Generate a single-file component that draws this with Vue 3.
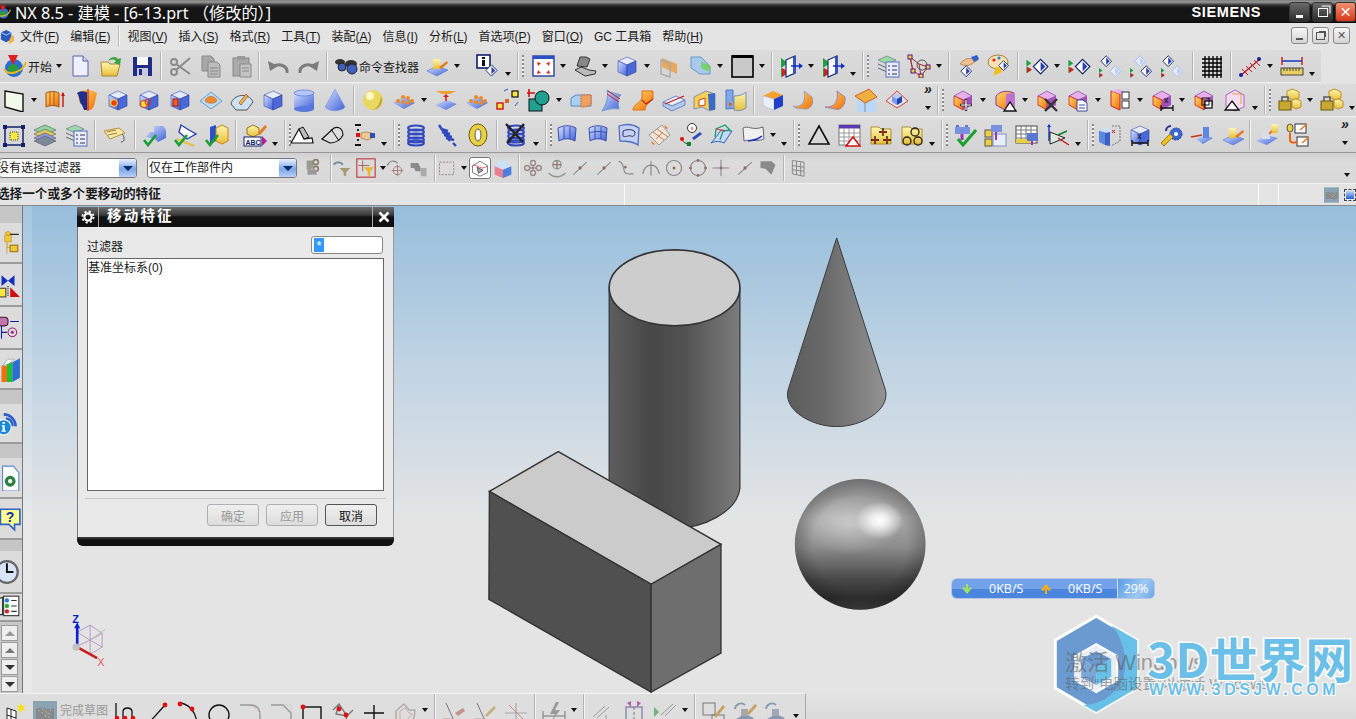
<template>
  <div class="app">
    <!-- shared icon parts -->
    <svg class="defs" width="0" height="0">
      <defs>
        <linearGradient id="gB" x1="0" y1="0" x2="1" y2="1"><stop offset="0" stop-color="#d6e2ff" /><stop offset="1" stop-color="#3f62d8" /></linearGradient>
        <linearGradient id="gO" x1="0" y1="0" x2="1" y2="1"><stop offset="0" stop-color="#ffd76a" /><stop offset="1" stop-color="#f0700a" /></linearGradient>
        <linearGradient id="gY" x1="0" y1="0" x2="0" y2="1"><stop offset="0" stop-color="#fff6b0" /><stop offset="1" stop-color="#e6bf3a" /></linearGradient>
        <linearGradient id="gP" x1="0" y1="0" x2="1" y2="1"><stop offset="0" stop-color="#f0c0f0" /><stop offset="1" stop-color="#8a3aa8" /></linearGradient>
        <linearGradient id="side" x1="0" y1="0" x2="1" y2="0"><stop offset="0" stop-color="#5e5e5e" /><stop offset=".32" stop-color="#474747" /><stop offset=".58" stop-color="#525252" /><stop offset="1" stop-color="#7c7c7c" /></linearGradient>
        <linearGradient id="coneG" x1="0" y1="0" x2="1" y2="0"><stop offset="0" stop-color="#5c5c5c" /><stop offset=".4" stop-color="#6a6a6a" /><stop offset="1" stop-color="#939393" /></linearGradient>
        <linearGradient id="ballG" x1="0" y1="0" x2="0" y2="1"><stop offset="0" stop-color="#8e8e8e" /><stop offset=".3" stop-color="#a8a8a8" /><stop offset=".52" stop-color="#8c8c8c" /><stop offset=".78" stop-color="#454545" /><stop offset=".91" stop-color="#2f2f2f" /><stop offset="1" stop-color="#444" /></linearGradient>
        <radialGradient id="ballH"><stop offset="0" stop-color="#fff" /><stop offset=".3" stop-color="#fff" stop-opacity=".8" /><stop offset="1" stop-color="#fff" stop-opacity="0" /></radialGradient>
        <radialGradient id="ballW"><stop offset="0" stop-color="#fff" stop-opacity=".4" /><stop offset="1" stop-color="#fff" stop-opacity="0" /></radialGradient>
        <radialGradient id="ballE"><stop offset=".72" stop-color="#000" stop-opacity="0" /><stop offset="1" stop-color="#000" stop-opacity=".22" /></radialGradient>

        <g id="c"><path d="M3 7l9-4 9 4-9 4z" fill="#e4ebff" stroke="#3a4fb0" stroke-width=".6" /><path d="M3 7l9 4v11l-9-4z" fill="url(#gB)" stroke="#3a4fb0" stroke-width=".6" /><path d="M12 11l9-4v11l-9 4z" fill="#4a68d6" stroke="#2c3c98" stroke-width=".6" /></g>
        <g id="co"><path d="M3 8l9-5 9 5-9 4z" fill="#e8b0e8" stroke="#8a3aa8" stroke-width=".7" /><path d="M3 8l9 4v10l-9-5z" fill="url(#gO)" stroke="#d02020" stroke-width=".8" /><path d="M12 12l9-4v9l-9 5z" fill="#a050b8" /></g>
        <g id="d"><path d="M12 3l9 9-9 9-9-9z" fill="#fff" stroke="#10206a" stroke-width="1.5" /><path d="M12 6l6 6-6 6z" fill="#2a3fb0" /></g>
        <g id="dl"><path d="M12 3l9 9-9 9-9-9z" fill="#e8eeff" stroke="#a0b8f0" stroke-width="1.5" /><path d="M12 6l6 6-6 6z" fill="#b8c8f8" /></g>
        <g id="tri"><path d="M2 4l7 5-7 5zM2 14l7 5-7 4z" fill="#20a040" /><path d="M3 14l7 4-7 5z" fill="#d02020" /></g>
        <g id="sf"><path d="M3 5c6-3 12-3 18 0l-1 13c-5-3-11-3-16 0z" fill="url(#gB)" stroke="#3a4fb0" /><path d="M9 4v12M15 4v12" stroke="#3a4fb0" /></g>

        <g id="start"><circle cx="11" cy="14" r="9" fill="#2c6fd0" /><path d="M6 12c3-3 8-2 9 1s-2 7-6 6-5-5-3-7z" fill="#2a9a3a" /><path d="M1 15c5 8 19 3 22-7" stroke="#e8b820" stroke-width="2" fill="none" /><path d="M5 1h10l-5 10z" fill="#e02020" /></g>
        <g id="new"><path d="M5 2h10l5 5v15H5z" fill="#eef0ff" stroke="#5560b0" /><path d="M15 2v5h5" fill="#cfd4f4" stroke="#5560b0" /></g>
        <g id="open"><path d="M2 8h7l2 2h10l-3 12H3z" fill="url(#gY)" stroke="#a08a30" /><path d="M9 7c3-5 8-5 10-2l3-1-1 7-6-2 2-2c-2-2-5-2-8 0z" fill="#3aa53a" /></g>
        <g id="save"><path d="M3 3h18l1 1v18H3z" fill="#1f2d86" /><rect x="7" y="3" width="11" height="8" fill="#fff" /><rect x="7" y="14" width="11" height="8" fill="#c8c8d8" /><rect x="9" y="15" width="3" height="6" fill="#1f2d86" /></g>
        <g id="cut" fill="none" stroke="#8a8a8a" stroke-width="2"><circle cx="6" cy="18" r="3" /><circle cx="6" cy="8" r="3" /><path d="M8 16L22 4M8 10l14 10" /></g>
        <g id="copy"><path d="M3 2h9l3 3v12H3z" fill="#a8a8a8" stroke="#888" /><path d="M9 8h9l3 3v12H9z" fill="#bcbcbc" stroke="#888" /><path d="M11 14h8M11 17h8M11 20h8" stroke="#888" /></g>
        <g id="paste"><rect x="3" y="4" width="16" height="18" fill="#aaa" stroke="#888" /><rect x="7" y="2" width="8" height="4" fill="#999" /><path d="M10 10h11v13H10z" fill="#c4c4c4" stroke="#888" /><path d="M12 14h7M12 17h7" stroke="#888" /></g>
        <g id="undo"><path d="M21 19c1-7-8-11-15-6" stroke="#7c7c7c" stroke-width="3" fill="none" /><path d="M2 7l2 10 8-5z" fill="#7c7c7c" /></g>
        <g id="redo"><use href="#undo" transform="matrix(-1 0 0 1 24 0)" /></g>
        <g id="binoc"><ellipse cx="6" cy="8" rx="5" ry="3" fill="#333" /><ellipse cx="17" cy="10" rx="6" ry="4" fill="#333" /><circle cx="8" cy="13" r="4" fill="#4060c0" stroke="#222" /><circle cx="18" cy="15" r="5" fill="#4060c0" stroke="#222" /></g>
        <g id="pad"><path d="M2 17l10-5 11 4-11 6z" fill="url(#gB)" stroke="#4a78c8" stroke-width=".6" /><rect x="8" y="5" width="7" height="10" fill="url(#gY)" /><path d="M14 13l8-6 1 2-7 6z" fill="#e87818" /></g>
        <g id="info"><rect x="1" y="1" width="13" height="13" fill="#fff" stroke="#10206a" stroke-width="1.6" /><path d="M6 3h3v2H6zM6 6h3v6H6z" fill="#111" /><use href="#d" transform="translate(8 9) scale(.62)" /></g>
        <g id="fit"><rect x="2" y="2" width="21" height="20" fill="#fff" stroke="#2a3f9a" stroke-width="1.4" /><rect x="2" y="2" width="21" height="3" fill="#2a50c8" /><path d="M6 8l4 1-3 3zM19 8l-4 1 3 3zM6 20l4-1-3-3zM19 20l-4-1 3-3z" fill="#e03020" /></g>
        <g id="shade"><path d="M4 12l3-9h6l4 2-3 8z" fill="#888" stroke="#333" /><path d="M2 16l6-3 8 3 7 1-1 3-10 2z" fill="#bbb" stroke="#333" /></g>
        <g id="hide"><path d="M5 4l15 6v10L5 13z" fill="#e8a860" /><path d="M4 6v14l9 3V9z" fill="none" stroke="#aaa" stroke-width="1.4" /></g>
        <g id="sect"><path d="M3 3h10l9 9v8H12L3 14z" fill="#a8c8ec" stroke="#6a98c8" /><path d="M13 8l9 3v7l-9-4z" fill="#7ad070" /></g>
        <g id="box"><rect x="2" y="2" width="21" height="21" fill="#c9c9c9" stroke="#000" stroke-width="1.6" /><rect x="2" y="1" width="21" height="3" fill="#000" /></g>
        <g id="vw"><use href="#tri" /><path d="M7 6l9-4v17l-9 4z" fill="#fff" stroke="#20307a" stroke-width="1.2" /><path d="M14 3l3-1v17l-3 2z" fill="#3a52c0" /><path d="M12 12h10" stroke="#1030c0" stroke-width="1.5" /><path d="M20 9l4 3-4 3z" fill="#1030c0" /></g>
        <g id="list"><path d="M2 6l9-4 9 4-9 4z" fill="#9ad8a8" stroke="#557" stroke-width=".5" /><path d="M2 10l9 4 2-1M2 14l9 4 2-1" stroke="#667" fill="none" /><rect x="10" y="8" width="13" height="15" fill="#e8ecff" stroke="#5a6ac0" /><path d="M12 12h2M16 12h5M12 16h2M16 16h5M12 20h2M16 20h5" stroke="#334" /></g>
        <g id="net" fill="none" stroke="#a03030"><path d="M3 3l9 7 9 3-7 9-8-5zM3 3l3 14M12 10l2 12" /><circle cx="15" cy="11" r="5" stroke="#555" /><g fill="#e8d040" stroke="#601080"><rect x="1" y="1" width="4" height="4" /><rect x="4" y="15" width="4" height="4" /><rect x="19" y="11" width="4" height="4" /><rect x="12" y="20" width="4" height="4" /></g></g>
        <g id="hand"><path d="M4 10c3-4 8-7 11-5l5-3 2 4-5 3c-3 3-9 3-13 1z" fill="#f0c090" stroke="#a06020" stroke-width=".6" /><path d="M15 3l6-2 2 4-5 3z" fill="#3060d0" /><use href="#d" transform="translate(3 10) scale(.6)" /></g>
        <g id="palette"><ellipse cx="11" cy="8" rx="10" ry="7" fill="#f8e0b0" stroke="#a08040" /><circle cx="7" cy="6" r="1.6" fill="#e02020" /><circle cx="12" cy="4" r="1.6" fill="#2080e0" /><path d="M6 22l3-9h7l-1 5z" fill="#f0c020" /><use href="#d" transform="translate(10 5) scale(.55)" /></g>
        <g id="d2"><use href="#tri" transform="translate(0 3) scale(.7)" /><use href="#d" transform="translate(6 3) scale(.8)" /></g>
        <g id="d3"><use href="#d" transform="translate(1 0) scale(.6)" /><use href="#tri" transform="translate(0 12) scale(.5)" /><use href="#dl" transform="translate(10 10) scale(.6)" /></g>
        <g id="d4"><use href="#dl" transform="translate(4 0) scale(.6)" /><use href="#tri" transform="translate(0 12) scale(.5)" /><use href="#d" transform="translate(10 10) scale(.6)" /></g>
        <g id="grid" stroke="#000" stroke-width="1.3"><path d="M2 5h20M2 9h20M2 13h20M2 17h20M2 21h20M5 2v22M9 2v22M13 2v22M17 2v22M21 2v22" /></g>
        <g id="hatch"><path d="M2 22L22 5" stroke="#c01818" stroke-width="1.3" /><path d="M4 15l6 6M8 12l6 6M12 9l6 6M16 6l6 6" stroke="#c01818" /><circle cx="3" cy="21" r="2" fill="#1020a0" /><circle cx="21" cy="5" r="2" fill="#1020a0" /></g>
        <g id="ruler"><path d="M2 7h20" stroke="#0030c0" stroke-width="1.4" /><path d="M2 3v8M22 3v8" stroke="#c01818" stroke-width="1.4" /><rect x="1" y="14" width="22" height="7" fill="#e8d060" stroke="#444" /><path d="M4 14v3M7 14v3M10 14v3M13 14v3M16 14v3M19 14v3" stroke="#444" /></g>

        <g id="plane"><path d="M3 3l18 3v18L3 19z" fill="#f4f8ea" stroke="#111" stroke-width="1.4" /></g>
        <g id="ext"><path d="M2 5c4-2 9-2 13 0v14c-4-2-9-2-13 0z" fill="url(#gO)" stroke="#a05010" /><path d="M6 4v14M10 4v14" stroke="#b85010" /><path d="M19 5v14" stroke="#d01010" stroke-width="1.4" /><path d="M17 8l2-4 2 4z" fill="#d01010" /></g>
        <g id="rev"><path d="M2 5c6-4 14-4 20 0l-3 13-3 4h-6l-2-6H5z" fill="url(#gO)" /><path d="M2 5c3 4 2 10 5 12l2 5h3V4C8 3 5 3 2 5z" fill="#1f2f90" /><path d="M13 1v22" stroke="#c01010" /></g>
        <g id="cubeh"><use href="#c" /><circle cx="8" cy="15" r="3.4" fill="#f04010" stroke="#ffe040" /></g>
        <g id="cubeb"><use href="#c" /><circle cx="7" cy="16" r="3.6" fill="#ffe040" stroke="#e03010" /><circle cx="11" cy="14" r="3" fill="none" stroke="#e03010" /></g>
        <g id="cubep"><use href="#c" /><rect x="5" y="11" width="5" height="7" fill="#f06020" stroke="#a01010" /></g>
        <g id="dome"><path d="M1 13l11-9 11 9-11 8z" fill="#bcdcf4" stroke="#6a9ac8" /><path d="M6 13c1-6 11-6 12 0-3 3-9 3-12 0z" fill="#f08a30" stroke="#c05010" stroke-width=".5" /></g>
        <g id="sector"><path d="M1 16C3 6 19 4 23 14l-6 8H6z" fill="#cde0f4" stroke="#555" /><path d="M9 15l7-9 2 2-7 9z" fill="#e8c040" stroke="#a02020" stroke-width=".6" /></g>
        <g id="cyl"><rect x="2" y="4" width="20" height="17" fill="url(#gB)" /><ellipse cx="12" cy="21" rx="10" ry="3" fill="#5878e0" /><ellipse cx="12" cy="5" rx="10" ry="3" fill="#b4c8fa" stroke="#4a62c8" stroke-width=".6" /></g>
        <g id="cone"><path d="M12 1l10 18c-4 5-16 5-20 0z" fill="url(#gB)" stroke="#6a88e0" stroke-width=".5" /></g>
        <g id="ball"><circle cx="12" cy="12" r="10" fill="#e8d860" /><circle cx="9" cy="8" r="4" fill="#fff8c0" /><path d="M20 8a10 10 0 0 1-10 14c5 0 9-5 10-14z" fill="#b8a030" /></g>
        <g id="studs"><path d="M1 15l11-7 11 7-11 6z" fill="url(#gB)" /><g fill="#f08a20"><circle cx="6" cy="13" r="2" /><circle cx="11" cy="9" r="2" /><circle cx="11" cy="14" r="2" /><circle cx="16" cy="10" r="2" /><circle cx="16" cy="15" r="2" /><circle cx="20" cy="13" r="2" /></g></g>
        <g id="lift"><path d="M1 17l11-5 11 4-11 6z" fill="url(#gB)" /><path d="M2 3h20l-6 3H8z" fill="#f0a030" /><path d="M12 7v6" stroke="#d02020" stroke-width="1.6" /><path d="M9 9l3-3 3 3z" fill="#d02020" /></g>
        <g id="squares"><rect x="1" y="15" width="6" height="6" fill="#f8e840" stroke="#d01010" stroke-width="1.4" /><rect x="16" y="3" width="6" height="6" fill="#f8e840" stroke="#111" stroke-width="1.2" /><rect x="9" y="11" width="4" height="4" fill="#e06020" /><path d="M8 3l4-2M22 14l-3 4" stroke="#3050c0" /></g>
        <g id="teal"><path d="M2 1v8M0 5h8" stroke="#d01010" stroke-width="1.6" /><rect x="2" y="11" width="13" height="12" fill="#1fa090" stroke="#111" /><circle cx="15" cy="10" r="7" fill="#1fa090" stroke="#111" /></g>
        <g id="offs"><path d="M2 10l5-3h15v11H2z" fill="#a8d0f0" stroke="#5a88c0" /><path d="M12 7h10v10l-6 2h-4z" fill="#f0a060" stroke="#d06020" stroke-dasharray="1.5 1" /></g>
        <g id="surf"><path d="M7 2c3 3 8 3 14 5-4 3-3 8-2 14-5-1-12 0-17 2 4-6 7-14 5-21z" fill="url(#gB)" stroke="#6a98d0" /><path d="M8 3l12 8M7 6l12 8" stroke="#d02020" /></g>
        <g id="flange"><path d="M2 22c0-5 7-7 9-12V3h11v8c-4 4-8 6-8 11z" fill="url(#gO)" stroke="#e07010" /><path d="M11 12l4 4 7-5" stroke="#c02010" fill="none" stroke-width="1.2" /></g>
        <g id="slice"><path d="M1 14l13-6 9 4-13 6z" fill="#e8f0ff" stroke="#6a88c8" /><path d="M1 14v4l9 5 13-6v-5l-13 6z" fill="#b4c8ec" stroke="#6a88c8" /><path d="M3 16l19-8" stroke="#d01818" stroke-width="1.3" /></g>
        <g id="frame3"><path d="M1 9l12-6 9 3v15l-5 2-8-4-8 2z" fill="#f8d050" stroke="#8090c0" /><path d="M15 6l7-1v17h-6z" fill="#3a6ac8" /><path d="M6 12l6-2v7l-6 1z" fill="#fff" stroke="#d04010" /></g>
        <g id="bend"><path d="M2 2h7v11l5 1v6l-12 1z" fill="#80a8e8" stroke="#5078c8" /><path d="M10 8c6 0 10-2 12-4v16c-4 3-8 3-12 2z" fill="url(#gY)" stroke="#7090c8" /><path d="M5 14l4 2-4 3z" fill="#e86020" /></g>
        <g id="cubeo"><path d="M2 8l10-5 10 4-9 4z" fill="#f8a030" /><path d="M2 8l11 3v11L2 18z" fill="#e8f0ff" stroke="#9ab" stroke-width=".4" /><path d="M13 11l9-4v11l-9 4z" fill="#2040c8" /></g>
        <g id="curl1"><path d="M1 18c9 2 13-4 11-15l8 6c3 8-3 13-8 12S5 22 1 18z" fill="url(#gO)" stroke="#7a9ad0" stroke-width=".7" /></g>
        <g id="curl2"><path d="M2 19c9 1 14-5 12-16l8 6c1 9-5 14-10 12z" fill="url(#gO)" stroke="#9a80b0" /></g>
        <g id="topbox"><rect x="3" y="10" width="19" height="14" fill="#bcd8f8" /><path d="M1 8l14-7 8 8-12 6z" fill="#f0b040" stroke="#d06020" /><path d="M11 15v9" stroke="#889" /></g>
        <g id="pyr"><path d="M1 13L12 3l11 10-11 7z" fill="#d8e4f8" stroke="#e04020" /><path d="M7 8l5-3 5 3-5 3z" fill="#b8ccf8" /><path d="M7 8l5 3v6l-5-3z" fill="#8098e8" /><path d="M12 11l5-3v6l-5 3z" fill="#2040b0" /></g>
        <g id="pm"><use href="#co" /><path d="M15 11v12M9 17h12" stroke="#333" stroke-width="2.4" /><path d="M15 12v10M10 17h10" stroke="#fff" stroke-width="1.2" /></g>
        <g id="pt"><path d="M3 8c4-5 11-6 18-3v14l-9 3-9-5z" fill="url(#gO)" stroke="#8a3aa8" /><path d="M13 6l8-1v14l-8 2z" fill="#c070d0" /><path d="M17 14l6 9H11z" fill="#fff" stroke="#111" stroke-width="1.3" /></g>
        <g id="px"><use href="#co" /><path d="M10 11l12 12M22 11L10 23" stroke="#333" stroke-width="2.4" /></g>
        <g id="pc"><use href="#co" /><path d="M11 12h6l4 3v8H11z" fill="#fff" stroke="#3a4a9a" /><path d="M13 17h6M13 20h6" stroke="#3a4a9a" /></g>
        <g id="ps"><path d="M3 3l9 3v16l-9-4z" fill="url(#gO)" stroke="#d02020" /><path d="M3 3l8-2 6 3-5 2z" fill="#e8b0e8" /><rect x="14" y="4" width="7" height="7" fill="#fff" stroke="#333" /><rect x="14" y="13" width="7" height="7" fill="#fff" stroke="#333" /></g>
        <g id="pd"><use href="#co" /><path d="M11 20h12M11 17v6M23 17v6" stroke="#111" stroke-width="1.3" /><text x="14" y="15" font-size="9" font-family="Liberation Sans" fill="#111">x</text></g>
        <g id="pf"><use href="#co" /><rect x="13" y="13" width="7" height="7" fill="#fff" stroke="#111" stroke-width="1.3" /><rect x="10" y="10" width="7" height="7" fill="none" stroke="#111" /></g>
        <g id="pl"><path d="M3 7l9-5 9 5v12l-9 4-9-4z" fill="#f4dcf4" stroke="#b060c0" /><path d="M9 6h9v10" fill="none" stroke="#e8a040" /><path d="M9 13l7 9H2z" fill="#fff" stroke="#111" stroke-width="1.3" /></g>
        <g id="locks"><path d="M9 3l6-2 6 3v6l-6 2-6-3z" fill="url(#gY)" stroke="#c09020" /><path d="M14 12l4-1 5 2v6l-5 2-4-2z" fill="url(#gY)" stroke="#c09020" /><rect x="1" y="13" width="12" height="9" fill="#c8a830" stroke="#6a5a10" /><path d="M4 13V9h6v4" fill="none" stroke="#5a5a5a" stroke-width="1.6" /></g>

        <g id="frame"><rect x="3" y="4" width="18" height="18" fill="none" stroke="#10206a" stroke-width="1.5" /><rect x="8" y="9" width="8" height="8" fill="#f8e840" stroke="#444" stroke-dasharray="1 1" /><g fill="#10206a"><rect x="1" y="2" width="4" height="4" /><rect x="19" y="2" width="4" height="4" /><rect x="1" y="20" width="4" height="4" /><rect x="19" y="20" width="4" height="4" /></g></g>
        <g id="layers" stroke="#555" stroke-width=".6"><path d="M1 7l11-5 11 5-11 5z" fill="#8ed8a0" /><path d="M1 11l11 5 11-5-11-5z" fill="#d8c860" /><path d="M1 15l11 5 11-5-11-5z" fill="#9098e0" /><path d="M1 18l11 5 11-5-11-5z" fill="#7a8a9a" /></g>
        <g id="tag"><path d="M2 8l15-3 6 5-15 6z" fill="#fce8a0" stroke="#b89040" /><path d="M5 9l9-2M6 12l9-2" stroke="#a08040" /><path d="M20 11c3 3 3 8-1 8" fill="none" stroke="#555" /></g>
        <g id="k1"><path d="M3 14l4-5h4V3h9l3 4v8l-8 4-3-3z" fill="url(#gB)" /><path d="M1 17l4 5 8-10" fill="none" stroke="#18a030" stroke-width="2.6" /></g>
        <g id="k2"><path d="M7 2l8 5 7 4-9 5-8-7z" fill="#fff" stroke="#2a3fb0" stroke-width="1.4" /><path d="M3 16l17 7" stroke="#e8c040" stroke-width="2" /><path d="M1 17l4 5 8-10" fill="none" stroke="#18a030" stroke-width="2.6" /></g>
        <g id="k3"><path d="M5 4l6-2v16l-6 3z" fill="#2a50d0" /><path d="M11 5l6-3 6 3v13l-6 3-6-3z" fill="url(#gY)" stroke="#d08010" /><path d="M1 17l4 5 8-10" fill="none" stroke="#18a030" stroke-width="2.6" /></g>
        <g id="abc"><path d="M4 5l6-3 6 3v6l-6 3-6-3z" fill="url(#gY)" stroke="#a07010" /><path d="M15 10l7-8 2 2-7 8z" fill="#e87818" /><rect x="1" y="14" width="17" height="9" fill="#fff" stroke="#10206a" /><text x="2.5" y="21.5" font-size="7" font-weight="700" font-family="Liberation Sans" fill="#10206a">ABC</text><path d="M19 13l5 5-5 5z" fill="#b020a0" /></g>
        <g id="cu1"><path d="M1 20L9 6l5 10 8-1 1 5z" fill="#fff" stroke="#111" stroke-width="1.2" /><path d="M9 6l4-2 6 10-5 2z" fill="#bbb" stroke="#111" /></g>
        <g id="cu2"><path d="M1 16l12-11c6-2 9 2 9 7-3 6-9 8-13 8z" fill="#ddd" stroke="#111" stroke-width="1.2" /><path d="M10 6l8 12" stroke="#111" /></g>
        <g id="pick"><path d="M3 2h6M3 22h6M6 6v2M6 16v2" stroke="#111" stroke-width="1.8" /><rect x="4" y="10" width="4" height="4" fill="#e01010" /><path d="M9 10l5-1 6 1v5l-5 2-6-2z" fill="#f0c890" stroke="#a06020" stroke-width=".6" /><rect x="18" y="10" width="5" height="5" fill="#2a50c0" /></g>
        <g id="coil" fill="none" stroke="#3048c0" stroke-width="2"><ellipse cx="12" cy="5" rx="8" ry="2.5" /><ellipse cx="12" cy="9" rx="8" ry="2.5" /><ellipse cx="12" cy="13" rx="8" ry="2.5" /><ellipse cx="12" cy="17" rx="8" ry="2.5" /><ellipse cx="12" cy="20" rx="8" ry="2.5" /></g>
        <g id="spring"><path d="M4 2l2 3 9 13M6 6l7 2M7 9l8 2M9 12l8 2M11 15l8 2M18 20l3 3" fill="none" stroke="#3048c0" stroke-width="2.4" /></g>
        <g id="ring"><ellipse cx="12" cy="12" rx="9" ry="11" fill="#e8d040" stroke="#6a5a10" /><ellipse cx="12" cy="12" rx="3" ry="6" fill="#fff" stroke="#555" /></g>
        <g id="xcoil"><use href="#coil" /><path d="M2 1l17 18M20 1L3 20" stroke="#222" stroke-width="2.4" /></g>
        <g id="sf2"><use href="#sf" /><path d="M3 10c6-2 12-2 18 0" stroke="#3a4fb0" fill="none" /></g>
        <g id="sf3"><path d="M2 3c6-2 14-2 20 2l-1 17c-5-4-12-4-18-4z" fill="#c4d0fa" stroke="#5070c0" stroke-width="1.3" /><path d="M6 8c4-2 10-2 12 1 0 4-2 5-4 4-3-1-6 2-8 0z" fill="none" stroke="#334" /></g>
        <g id="sf4"><path d="M1 12L14 2l8 10-11 10z" fill="#f4e4d4" stroke="#999" /><path d="M5 9l11 8M9 6l11 8M8 16l7-7" stroke="#c08060" /><path d="M16 2l4 3-2 1zM3 18l4 3-2 1z" fill="#f07010" /></g>
        <g id="sf5"><circle cx="13" cy="5" r="4.5" fill="#fff" stroke="#333" /><path d="M3 15c0 4 4 6 9 7" fill="none" stroke="#333" /><circle cx="3" cy="16" r="2" fill="#e01010" /><rect x="8" y="19" width="4" height="4" fill="#108030" /><path d="M13 15l8-6 2 2-8 6z" fill="#3048c0" /><path d="M13 4v3" stroke="#e01010" /></g>
        <g id="sf6"><path d="M1 20c4-4 7-9 10-13l11 1-8 12c-4-2-9-2-13 0z" fill="#c8d8f8" stroke="#2a60c0" /><path d="M5 14l1-8 9-4 5 5-7 1-3 9" fill="none" stroke="#10a070" stroke-width="1.3" /><path d="M6 6l9 2" stroke="#e03040" /></g>
        <g id="sf7"><path d="M2 5c5-3 9 3 20-1l1 12c-7 3-14 0-20 2z" fill="#f0f0f0" stroke="#666" /><path d="M7 18c5-1 8 0 14-5" stroke="#2030c0" stroke-width="1.6" fill="none" /></g>
        <g id="tria"><path d="M12 3l10 18H2z" fill="none" stroke="#111" stroke-width="1.6" /></g>
        <g id="table"><rect x="1" y="2" width="21" height="20" fill="#fff" stroke="#777" /><rect x="1" y="2" width="21" height="3.5" fill="#5a3ab0" /><path d="M1 10h21M1 14h21M1 18h21M6 5v17M11 5v17M16 5v17" stroke="#999" /><path d="M15 14l7 9H8z" fill="#fff" stroke="#d01010" stroke-width="1.5" /></g>
        <g id="fd1"><path d="M2 4h8l2 2h10v15H2z" fill="url(#gY)" stroke="#b09030" /><path d="M14 5v8M10 9h8M6 13v8M2 17h8M18 13v8M14 17h8" stroke="#111" stroke-width="1.3" /><circle cx="14" cy="9" r="1.5" fill="#d01010" /><circle cx="6" cy="17" r="1.5" fill="#d01010" /><circle cx="18" cy="17" r="1.5" fill="#d01010" /></g>
        <g id="fd2"><path d="M2 4h8l2 2h10v15H2z" fill="url(#gY)" stroke="#b09030" /><g fill="none" stroke="#222" stroke-width="1.3"><circle cx="15" cy="9" r="4" /><circle cx="7" cy="18" r="4" /><circle cx="18" cy="18" r="4" /></g></g>
        <g id="m1"><rect x="3" y="2" width="3" height="4" fill="#5a78d0" /><rect x="12" y="2" width="3" height="4" fill="#5a78d0" /><rect x="2" y="4" width="15" height="7" fill="#7a90e0" /><path d="M9 11v6" stroke="#a030b0" stroke-width="3" /><path d="M5 16l5 6L23 7" fill="none" stroke="#18a030" stroke-width="3" /></g>
        <g id="m2"><rect x="1" y="7" width="7" height="7" fill="#f0d040" stroke="#555" /><rect x="1" y="16" width="7" height="7" fill="#f0d040" stroke="#555" /><rect x="9" y="11" width="13" height="12" fill="#e8ecff" stroke="#8090c0" /><rect x="7" y="2" width="11" height="7" fill="#7a90e0" /><path d="M12 9v8" stroke="#a030b0" stroke-width="2" /></g>
        <g id="m3"><rect x="1" y="3" width="21" height="17" fill="#fff" stroke="#444" /><path d="M1 7h21M1 11h21M1 15h21M6 3v17M11 3v17M16 3v17" stroke="#777" /><rect x="1" y="16" width="16" height="4" fill="#e8d040" /><rect x="12" y="10" width="11" height="8" fill="#5a78d0" /><path d="M17 18v4" stroke="#a030b0" stroke-width="2" /></g>
        <g id="axes"><path d="M3 2v16" stroke="#1030c0" stroke-width="1.4" /><path d="M1 4l2-3 2 3z" fill="#1030c0" /><path d="M4 9l15 6-15 6z" fill="#e0ece0" stroke="#222" /><path d="M12 12l9-4" stroke="#108030" stroke-width="1.4" /><path d="M12 15l11 7" stroke="#d01010" stroke-width="1.4" /></g>
        <g id="b1"><path d="M2 8l6-3v17l-6-3z" fill="#5a88e0" /><path d="M2 8l5-3 10 2-5 3z" fill="#cfe0ff" /><path d="M8 10l5-1v14l-5-1z" fill="#3a60c8" /><path d="M15 3h8v15l-9 5" fill="none" stroke="#777" stroke-dasharray="2 1" /><path d="M15 7l3 3M18 7l-3 3" stroke="#d01010" /></g>
        <g id="b2"><use href="#c" /><path d="M4 20h16M4 17v6M20 17v6" stroke="#111" stroke-width="1.4" /><text x="9" y="16" font-size="9" font-family="Liberation Sans" fill="#111">x</text></g>
        <g id="wrench"><path d="M12 3a5 5 0 0 0-5 5" fill="none" stroke="#203090" stroke-width="2" /><circle cx="17" cy="11" r="6" fill="#3a68d0" stroke="#203090" stroke-dasharray="2 1" /><circle cx="17" cy="11" r="2" fill="#fff" /><path d="M2 20l9-9 3 3-9 9z" fill="#f0c020" stroke="#a08010" /></g>
        <g id="b3"><path d="M6 16l9-4 8 3-10 6z" fill="url(#gB)" /><rect x="13" y="4" width="6" height="11" fill="#5a88e0" /><path d="M1 14l11-2" stroke="#d03010" stroke-width="1.4" /></g>
        <g id="b4"><path d="M1 18l11-6 11 3-11 7z" fill="url(#gB)" /><rect x="7" y="7" width="8" height="9" fill="#d8dce8" /><rect x="16" y="1" width="7" height="9" fill="url(#gY)" /><path d="M14 11l3-3" stroke="#e87818" stroke-width="2" /></g>
        <g id="link"><rect x="9" y="1" width="11" height="9" fill="#fff" stroke="#333" /><rect x="11" y="14" width="11" height="9" fill="#fff" stroke="#333" /><ellipse cx="4" cy="5" rx="3" ry="4" fill="#f0d040" stroke="#555" /><path d="M4 10v7c0 3 4 3 7 2" stroke="#f06010" stroke-width="2" fill="none" /><path d="M14 7l7-6M16 20l7-6" stroke="#e87818" stroke-width="1.6" /></g>

        <g id="x1"><path d="M2 3h8v7l-3 4H2z" fill="#9a9a90" /><circle cx="13" cy="5" r="3" fill="none" stroke="#8a8070" stroke-width="2" /><circle cx="13" cy="13" r="3" fill="none" stroke="#8a8070" stroke-width="2" /><rect x="3" y="14" width="11" height="6" fill="#999" /></g>
        <g id="x2"><path d="M2 8c3-4 8-4 11 0" stroke="#7c8a9a" stroke-width="2.4" fill="none" /><path d="M9 12h13l-5 5v5l-3-1v-4z" fill="#a89a70" /></g>
        <g id="x3"><rect x="1" y="1" width="22" height="22" fill="none" stroke="#c04040" stroke-width="1.4" /><path d="M3 9h13M8 3v13" stroke="#a05050" /><path d="M9 11h13l-5 5v6l-3-1v-5z" fill="#e8b830" /></g>
        <g id="x4"><path d="M3 9a7 7 0 0 1 12-3" stroke="#888" stroke-width="1.5" fill="none" /><circle cx="15" cy="15" r="5" fill="none" stroke="#a07070" /><path d="M15 8v14M8 15h14" stroke="#a07070" /></g>
        <g id="x5"><path d="M2 6h9l3 6v4H8l-2-4H2z" fill="#8a8a8a" /><rect x="14" y="12" width="7" height="10" fill="#aaa" /></g>
        <g id="x6"><rect x="3" y="5" width="17" height="15" fill="none" stroke="#9a8a8a" stroke-dasharray="2.5 1.5" stroke-width="1.2" /></g>
        <g id="x7"><path d="M2 9l10-6 10 6v9l-10 5-10-5z" fill="#fff" stroke="#555" /><path d="M2 9c7-3 11 8 20 0" stroke="#d03030" fill="none" /><path d="M8 11l8 4-6 4z" fill="#aaa" stroke="#333" /></g>
        <g id="x8"><path d="M12 1l10 9-10 4L2 10z" fill="#cde0f8" /><path d="M12 14l10-4v10l-10 4z" fill="#4a80e0" /><path d="M2 10l10 4v10L2 20z" fill="#e88090" /></g>
        <g id="y1" fill="none" stroke="#9a8a8a" stroke-width="1.6"><circle cx="12" cy="6" r="3" /><circle cx="5" cy="12" r="3" /><circle cx="19" cy="12" r="3" /><circle cx="12" cy="18" r="3" /><path d="M12 9v6M8 12h8" /></g>
        <g id="y2" fill="none" stroke="#8a9a8a" stroke-width="1.6"><circle cx="12" cy="8" r="5" /><path d="M2 18c6 6 14 6 20 0" /><path d="M12 3v10M7 8h10" stroke="#9a7070" /></g>
        <g id="y3"><path d="M4 20L20 5" stroke="#888" stroke-width="1.3" /><circle cx="12" cy="12" r="2" fill="#9a6a6a" /></g>
        <g id="y4"><path d="M2 4c7 0 5 12 8 14s6 1 10 1" stroke="#888" stroke-width="1.4" fill="none" /><circle cx="10" cy="11" r="1.6" fill="#9a6a6a" /></g>
        <g id="y5"><path d="M2 19C5 5 19 5 22 19M12 4v17" stroke="#888" stroke-width="1.4" fill="none" /></g>
        <g id="y6"><circle cx="12" cy="12" r="9" fill="none" stroke="#888" stroke-width="1.4" /><circle cx="12" cy="12" r="1.8" fill="#9a6a6a" /></g>
        <g id="y7"><circle cx="12" cy="12" r="9" fill="none" stroke="#8a8a8a" stroke-width="1.4" /><g fill="#9a6a6a"><circle cx="12" cy="3" r="1.7" /><circle cx="3" cy="12" r="1.7" /><circle cx="21" cy="12" r="1.7" /><circle cx="12" cy="21" r="1.7" /></g></g>
        <g id="y8"><path d="M12 2v20M2 12h20" stroke="#888" stroke-width="1.3" /><circle cx="12" cy="12" r="1.7" fill="#9a6a6a" /></g>
        <g id="y9"><path d="M3 4h13l5 4-5 12-7-7-6-1z" fill="#8a8a8a" /></g>
        <g id="y10"><path d="M4 3l14 2v17L4 19zM4 9l14 2M4 14l14 2M9 4v16M14 5v16" fill="none" stroke="#8a8a8a" stroke-width="1.2" /></g>

        <g id="z1"><path d="M3 7l9 3v14L3 21z" fill="#fff" stroke="#222" /><path d="M3 14l9 3M7 8v14" stroke="#222" /><path d="M17 1l1 4 4-1-3 3 3 3-4-1-1 4-1-4-4 1 3-3-3-3 4 1z" fill="#f8e020" /></g>
        <g id="z2"><rect width="24" height="24" fill="#8aa4b4" /><path d="M3 8c6-4 12 3 18-1v11c-6 3-12-3-18 1z" fill="#888" /><path d="M5 9l12 8M9 8l10 7M12 16l6-7" stroke="#bbb" stroke-dasharray="2 2" /></g>
        <g id="z3" fill="none" stroke="#111" stroke-width="1.3"><path d="M2 2v20c0 3 6 3 7 0V10c1-4 8-4 9 0v12" /><g fill="#e01010" stroke="none"><circle cx="3" cy="17" r="2.3" /><circle cx="11" cy="17" r="2.3" /><circle cx="19" cy="17" r="2.3" /></g></g>
        <g id="z4"><path d="M2 24L20 4" stroke="#111" stroke-width="1.3" /><circle cx="20" cy="4" r="2.4" fill="#e01010" /></g>
        <g id="z5"><path d="M3 2c8 0 18 8 18 22" stroke="#111" stroke-width="1.3" fill="none" /><circle cx="4" cy="3" r="2.4" fill="#e01010" /><circle cx="16" cy="8" r="2.4" fill="#e01010" /></g>
        <g id="z6"><circle cx="12" cy="14" r="10" fill="none" stroke="#111" stroke-width="1.4" /></g>
        <g id="z7"><path d="M2 4h10c6 0 10 3 10 10v10" stroke="#999" stroke-width="1.4" fill="none" /><path d="M16 6l6 6" stroke="#c8a8a8" stroke-dasharray="1 1" /></g>
        <g id="z8"><path d="M2 4h12l8 8v12" stroke="#999" stroke-width="1.4" fill="none" /><path d="M14 4h8v8" stroke="#bbb" stroke-dasharray="1 1" fill="none" /></g>
        <g id="z9"><rect x="3" y="6" width="18" height="16" fill="none" stroke="#111" stroke-width="1.4" /><circle cx="3" cy="6" r="2.4" fill="#e01010" /><circle cx="21" cy="22" r="2.4" fill="#e01010" /></g>
        <g id="z10"><path d="M2 9l6-6 8 12 6-6M8 3l-3 10 11 2-2 7" stroke="#777" fill="none" stroke-width="1.4" /><circle cx="8" cy="8" r="2.4" fill="#e01010" /><circle cx="15" cy="14" r="2.4" fill="#e01010" /></g>
        <g id="z11"><path d="M12 4v20M2 12h20" stroke="#111" stroke-width="1.4" /></g>
        <g id="z12"><path d="M3 10l8-7 5 6h6l-1 8-7 7-11-3z" fill="none" stroke="#aaa" stroke-width="1.4" /><path d="M7 10l5-3 4 5 3 1-6 7-6-2z" fill="none" stroke="#c8a8a8" /></g>
        <g id="w1"><path d="M4 2l10 22" stroke="#777" /><path d="M1 18h10" stroke="#c89898" /><path d="M13 12l8-5 2 3-7 5z" fill="#c89090" /></g>
        <g id="w2"><path d="M4 2l10 22" stroke="#777" /><path d="M1 18h10" stroke="#c89898" /><path d="M12 14l9-9 2 2-9 9z" fill="#c8b080" /></g>
        <g id="w3"><path d="M12 2v22" stroke="#999" /><path d="M1 12h22" stroke="#aaa" /><path d="M5 4l14 14" stroke="#c88888" /></g>
        <g id="w4"><path d="M1 10v10M23 10v10M1 15h22" stroke="#777" /><path d="M14 1l-6 12h5l-4 8 9-12h-5l4-8z" fill="#999" /></g>
        <g id="w5"><path d="M2 16L14 5M6 17L18 6" stroke="#999" /><path d="M8 24h14M15 14v10" stroke="#999" /></g>
        <g id="w6"><path d="M4 24V6h16v18" stroke="#8a8aa8" stroke-width="1.4" fill="none" /><path d="M12 6v18" stroke="#777" stroke-dasharray="3 2" /><path d="M5 2l4 4V0zM19 2l-4 4V0z" fill="#b060b0" /></g>
        <g id="w7"><path d="M1 6l5 5-5 5z" fill="#70b080" /><path d="M8 14L20 3M12 15L23 4M13 18v6" stroke="#999" /></g>
        <g id="w8"><rect x="1" y="2" width="12" height="12" fill="none" stroke="#777" /><rect x="10" y="14" width="12" height="10" fill="none" stroke="#777" /><path d="M12 15l9-11 2 2-9 11z" fill="#c8a060" /></g>
        <g id="w9"><path d="M2 8a6 6 0 0 1 10-4" stroke="#8898b0" stroke-width="1.8" fill="none" /><path d="M3 18l9-5 9 4-9 6z" fill="#8898b0" /><rect x="8" y="8" width="7" height="7" fill="#a8a8a8" /><path d="M14 12l8-9 2 2-8 9z" fill="#c8a060" /></g>
        <g id="w10"><path d="M2 8a6 6 0 0 1 10-4" stroke="#8898b0" stroke-width="1.8" fill="none" /><path d="M3 18l9-5 9 4-9 6z" fill="#8898b0" /><rect x="8" y="8" width="7" height="7" fill="#a0a8b8" /></g>

        <g id="s1"><path d="M12 1l-3 2 3 2 3-2zM9 5h6v6H9zM12 12h-1v10M11 16h4" stroke="#c09020" fill="#f0c830" stroke-width=".6" /><rect x="14" y="14" width="7" height="6" fill="#f0c830" stroke="#a07010" /><path d="M22 4h-8" stroke="#111" /></g>
        <g id="s2"><path d="M6 3l6 5 6-5v10l-6-5-6 5z" fill="#1030c0" /><path d="M12 13v10" stroke="#111" stroke-dasharray="1 1" /><rect x="1" y="15" width="9" height="8" fill="#f8e840" stroke="#444" /><path d="M14 14l9 9h-9z" fill="#d01010" /></g>
        <g id="s3"><rect x="2" y="2" width="10" height="8" rx="3" fill="#c078a8" stroke="#501040" /><path d="M6 10v12M6 16h5M14 6h8" stroke="#1020a0" /><circle cx="16" cy="16" r="4" fill="none" stroke="#a02080" /><circle cx="16" cy="16" r="1.4" fill="#a02080" /></g>
        <g id="s4"><path d="M6 9h5v15H6z" fill="#f07010" /><path d="M11 6h5v18h-5z" fill="#20c030" /><path d="M16 6l7-4v18l-7 4z" fill="#2a70d0" /><path d="M7 9l5-6h6l-5 4z" fill="#fff" stroke="#888" stroke-width=".5" /></g>
        <g id="s5"><path d="M8 4c6 0 11 5 11 11M10 8c4 0 6 3 6 7" fill="none" stroke="#2a60c8" stroke-width="2.4" /><circle cx="8" cy="16" r="7" fill="#1a88d8" stroke="#fff" /><path d="M7 11h2v2H7zM6 14h3v5h1v1H6v-1h1v-4H6z" fill="#fff" /></g>
        <g id="s6"><path d="M7 1h10l5 6v17H7z" fill="#fff" stroke="#5a88d0" /><circle cx="14" cy="15" r="5" fill="#2a8040" /><circle cx="14" cy="15" r="2" fill="#fff" /></g>
        <g id="s7"><path d="M5 3h18v14h-5v5l-5-5H5z" fill="#ffff90" stroke="#2a60c8" stroke-width="1.5" /><text x="10" y="15" font-size="13" font-weight="700" font-family="Liberation Sans" fill="#1030a0">?</text></g>
        <g id="s8"><circle cx="11" cy="12" r="10" fill="#d8e4f8" stroke="#666" stroke-width="2" /><path d="M11 4v8h6" stroke="#111" stroke-width="1.8" fill="none" /></g>
        <g id="s9"><rect x="8" y="2" width="14" height="18" fill="#fff" stroke="#333" /><path d="M1 5l6-2v16H1z" fill="#e8e8e8" stroke="#333" /><circle cx="11" cy="6" r="2" fill="#2080e0" /><circle cx="11" cy="11" r="2" fill="#20b030" /><circle cx="11" cy="16" r="2" fill="#e02020" /><path d="M15 6h5M15 11h5M15 16h5" stroke="#333" /></g>
        <g id="m0"><path d="M7 2l6 3v8l-6 3-6-3V5z" fill="#2a5ac0" /><path d="M1 5l6 3 6-3" stroke="#cde" fill="none" /><path d="M13 9l3-1v7l-6 3v-3z" fill="#f0b840" /></g>
      </defs>
    </svg>

    <header class="title">
      <svg class="title-ico" viewBox="0 0 24 24"><use href="#start" /></svg>
      <span class="title-text">NX 8.5 - 建模 - [6-13.prt （修改的）]</span>
      <span class="siemens">SIEMENS</span>
      <div class="win-btns">
        <button class="wb"><i class="min"></i></button>
        <button class="wb"><i class="rest"></i></button>
        <button class="wb close">✕</button>
      </div>
    </header>

    <nav class="menu">
      <svg class="menu-ico" viewBox="0 0 16 18"><use href="#m0" /></svg>
      <template v-for="(m, i) in menus" :key="m.t">
        <span class="menu-item">{{ m.t }}<template v-if="m.k">(<u>{{ m.k }}</u>)</template></span>
        <span v-if="i === 1" class="menu-sep"></span>
      </template>
      <div class="doc-btns">
        <span class="db"><i class="dmin"></i></span>
        <span class="db"><i class="drest"></i></span>
        <span class="db dx">✕</span>
      </div>
    </nav>

    <section v-for="(row, r) in rows" :key="r" class="bar" :class="'bar' + r">
      <template v-for="(it, n) in row" :key="n">
        <svg v-if="it.t === 'i'" class="ico" viewBox="0 0 24 24"><use :href="'#' + it.k" /></svg>
        <span v-else-if="it.t === 'label'" class="bar-label">{{ it.k }}</span>
        <i v-else :class="it.t" :style="it.w ? { marginRight: it.w + 'px' } : null"></i>
      </template>
    </section>

    <section class="bar filter">
      <div class="combo first"><span>没有选择过滤器</span><b><i></i></b></div>
      <div class="combo"><span>仅在工作部件内</span><b><i></i></b></div>
      <template v-for="(it, n) in filterRow" :key="n">
        <span v-if="it.k === 'x7'" class="toggle"><svg class="ico2" viewBox="0 0 24 24"><use href="#x7" /></svg></span>
        <svg v-else-if="it.t === 'i'" class="ico2" viewBox="0 0 24 24"><use :href="'#' + it.k" /></svg>
        <i v-else :class="it.t" :style="it.w ? { marginRight: it.w + 'px' } : null"></i>
      </template>
      <i class="v end"></i>
    </section>

    <section class="status">
      <strong class="cue">选择一个或多个要移动的特征</strong>
      <span class="cell"></span>
      <span class="cell small"></span>
      <svg class="flag" viewBox="0 0 24 24"><use href="#z2" /></svg>
      <span class="fs"><i></i></span>
    </section>

    <main class="work">
      <aside class="side">
        <div v-for="(s, i) in sideItems" :key="i" :class="s.k ? 'side-btn' : 'side-gap'" :style="{ height: s.h + 'px' }">
          <svg v-if="s.k" viewBox="0 0 24 24"><use :href="'#' + s.k" /></svg>
        </div>
        <div class="nav-btns">
          <span class="nb"><i class="bar-up"></i></span>
          <span class="nb"><i class="up"></i></span>
          <span class="nb"><i class="down"></i></span>
          <span class="nb"><i class="bar-down"></i></span>
        </div>
      </aside>
      <div class="strip"></div>

      <div class="canvas">
        <svg class="scene" viewBox="32 205 1324 514">
          <!-- cylinder -->
          <path d="M609 287V490C612 512 650 528 675 528 702 528 737 512 740 488V287Z" fill="url(#side)" stroke="#333" stroke-width="1.2" />
          <ellipse cx="674.5" cy="287" rx="65.5" ry="38" fill="#cdcdcd" stroke="#333" stroke-width="1.6" />
          <!-- cone -->
          <path d="M837 237L886 390C890 410 862 426 837 426S784 410 788 390Z" fill="url(#coneG)" stroke="#3a3a3a" stroke-width="1" />
          <!-- block -->
          <path d="M489 491L558 451 721 544 651 584Z" fill="#cbcbcb" stroke="#333" stroke-width="1.4" />
          <path d="M489 491L651 584V692L488.5 599Z" fill="#505050" stroke="#333" stroke-width="1.4" />
          <path d="M651 584L721 544V653L651 692Z" fill="#6e6e6e" stroke="#333" stroke-width="1.4" />
          <!-- sphere -->
          <circle cx="860.5" cy="544" r="65.5" fill="url(#ballG)" />
          <ellipse cx="850" cy="524" rx="52" ry="30" fill="url(#ballW)" />
          <ellipse cx="880" cy="520" rx="24" ry="19" fill="url(#ballH)" />
          <circle cx="860.5" cy="544" r="65.5" fill="url(#ballE)" />
          <!-- triad -->
          <g fill="none" stroke="#b08ac0" stroke-width=".8">
            <path d="M76 632l13-7 12 8v14l-12 7-13-8zM76 632l13 8 12-7M89 640v14M76 646l13-6 12 7M89 625v15" />
          </g>
          <path d="M89 640l15-11" stroke="#9ac09a" stroke-width=".8" />
          <path d="M76 647V626" stroke="#0a1fd0" stroke-width="2.6" />
          <path d="M73 628l3-6 3 6z" fill="#0a1fd0" />
          <path d="M76 647l20 11" stroke="#c82020" stroke-width="2.6" />
          <circle cx="75" cy="647" r="3.6" fill="#c0c0c0" />
          <text x="71" y="623" class="axis z">Z</text>
          <text x="96" y="666" class="axis xl">X</text>

          <!-- logo and watermark -->
          <path d="M1097 616l41 24v48l-41 24-41-24v-48z" fill="#6b9ad0" stroke="#fff" stroke-width="3" />
          <path d="M1112 625l26 15v48l-41 24-13-7c22 0 40-16 42-38 1-16-5-32-14-42z" fill="#68bfe8" />
          <path d="M1097 644l21 12v24l-21 12-21-12v-24z" fill="#e8eef4" stroke="#fff" stroke-width="2" />
          <path d="M1097 651l15 8-15 9-15-9z" fill="#6b9ad0" />
          <path d="M1082 659l15 9v17l-15-8z" fill="#7aa6d8" />
          <path d="M1097 668l15-9v18l-15 8z" fill="#68bfe8" />
          <text x="1066" y="670" class="activate big">激活 Windows</text>
          <text x="1066" y="689" class="activate">转到“电脑设置”以激活 Windows。</text>
          <text x="1148" y="678" class="brand">3D世界网</text>
          <text x="1150" y="695" class="brand-url">WWW.3DSJW.COM</text>
        </svg>

        <div class="speed">
          <svg class="arrow" viewBox="0 0 12 12"><path d="M6 11L1 5l2-1 2 2V1h2v5l2-2 2 1z" fill="#a4e060" /></svg>
          <span class="rate">0KB/S</span>
          <svg class="arrow second" viewBox="0 0 12 12"><path d="M6 1l5 6-2 1-2-2v5H5V6L3 8 1 7z" fill="#f8b010" /></svg>
          <span class="rate">0KB/S</span>
          <span class="pct">29%</span>
        </div>

        <div class="dialog">
          <div class="dlg-title">
            <span class="dlg-gear">
              <svg viewBox="0 0 14 14" width="14" height="14">
                <circle cx="7" cy="7" r="3.6" fill="none" stroke="#fff" stroke-width="2.2" />
                <circle cx="7" cy="7" r="5.6" fill="none" stroke="#fff" stroke-width="1.8" stroke-dasharray="2.2 2.2" />
              </svg>
            </span>
            <span class="dlg-name">移动特征</span>
            <span class="dlg-x">
              <svg viewBox="0 0 12 12" width="12" height="12"><path d="M1.5 1.5l9 9M10.5 1.5l-9 9" stroke="#fff" stroke-width="2.6" /></svg>
            </span>
          </div>
          <div class="dlg-body">
            <div class="dlg-filter">
              <label>过滤器</label>
              <div class="fake-input"><mark>*</mark></div>
            </div>
            <div class="dlg-list">基准坐标系(0)</div>
            <div class="dlg-rule"></div>
            <div class="dlg-actions">
              <button disabled>确定</button>
              <button disabled>应用</button>
              <button class="active">取消</button>
            </div>
          </div>
          <div class="dlg-foot"></div>
        </div>
      </div>
    </main>

    <section class="bottom">
      <template v-for="(it, n) in bottomRow" :key="n">
        <svg v-if="it.t === 'i'" class="ico" viewBox="0 0 24 24"><use :href="'#' + it.k" /></svg>
        <span v-else-if="it.t === 'label'" class="done">{{ it.k }}</span>
        <i v-else :class="it.t" :style="it.w ? { marginRight: it.w + 'px' } : null"></i>
      </template>
    </section>
  </div>
</template>

<script setup>
// toolbar rows as short strings: | separator, : grip, v caret, _ low caret, +n spacer, ~text label
const parse = (str) =>
  str
    .trim()
    .split(/\s+/)
    .map((tok) => {
      if (tok === "|") return { t: "sep" };
      if (tok === ":") return { t: "grip" };
      if (tok === "v") return { t: "v" };
      if (tok === "_") return { t: "v low" };
      if (tok === ">>") return { t: "more" };
      if (tok[0] === "+") return { t: "gap", w: Number(tok.slice(1)) };
      if (tok[0] === "~") return { t: "label", k: tok.slice(1) };
      return { t: "i", k: tok };
    });

const menus = [
  { t: "文件", k: "F" },
  { t: "编辑", k: "E" },
  { t: "视图", k: "V" },
  { t: "插入", k: "S" },
  { t: "格式", k: "R" },
  { t: "工具", k: "T" },
  { t: "装配", k: "A" },
  { t: "信息", k: "I" },
  { t: "分析", k: "L" },
  { t: "首选项", k: "P" },
  { t: "窗口", k: "O" },
  { t: "GC 工具箱" },
  { t: "帮助", k: "H" },
];

const rows = [
  `+-1 start ~开始 v +-1 new open save | cut copy paste +-2 | undo redo +-1 | binoc ~命令查找器 pad v +9 info _ | : fit v shade v c v hide sect v box v |
   vw v vw _ | : list net v | hand palette | d2 v d2 d3 d4 d3 +2 | grid | hatch v ruler _`,
  `+-2 plane v ext rev cubeh cubeb cubep dome sector c cyl cone | ball studs v lift studs squares teal v offs surf flange slice frame3 bend +-1 |
   cubeo curl1 curl2 topbox pyr +12 >> | : pm v pt v px pc v ps v pd v pf pl _ | : locks v locks _`,
  `+-2 frame layers list | tag +2 | +1 k1 k2 k3 | abc _ | : +-8 cu1 cu2 pick _ | : +-3 coil spring ring | xcoil _ | : +-4 sf sf2 sf3 sf4 sf5 sf6 sf7 v _ | : tria table fd1 fd2 _ |
   : +-2 m1 m2 m3 axes _ | : +-4 b1 b2 wrench b3 pad +-2 | +-2 b4 link +28 >>`,
].map(parse);

const filterRow = parse(
  "+6 x1 | +-3 x2 x3 v +-5 x4 x5 | +-2 x6 v +-1 x7 x8 | y1 y2 y3 y3 y4 y5 y6 y7 y8 y3 y9 | y10"
);

const bottomRow = parse(
  `z1 +-2 z2 ~完成草图 +2 z3 z4 z5 z6 z7 z8 z9 z10 z11 z12 v | w1 w2 w3 | w4 v | w5 w6 w7 v | w8 w9 w10 _ |`
);

const sideItems = [
  { h: 17 },
  { k: "s1", h: 41 },
  { k: "s2", h: 43 },
  { k: "s3", h: 43 },
  { k: "s4", h: 40 },
  { h: 14 },
  { k: "s5", h: 40 },
  { h: 14 },
  { k: "s6", h: 41 },
  { k: "s7", h: 41 },
  { h: 11 },
  { k: "s8", h: 43 },
  { k: "s9", h: 28 },
];
</script>

<style scoped>
.app {
  position: relative;
  width: 1356px;
  height: 719px;
  display: flex;
  flex-direction: column;
  overflow: hidden;
  background: #e4e4e4;
  color: #1a1a1a;
  font-family: "Liberation Sans", "Noto Sans CJK SC", sans-serif;
  font-size: 12px;
}

.defs {
  position: absolute;
}

/* title bar */
.title {
  height: 23px;
  flex: none;
  display: flex;
  align-items: center;
  background: linear-gradient(#7a7a7a 0, #9a9a9a 2px, #333 5px, #141414 8px, #141414 22px, #000 23px);
  color: #fff;
  font-size: 15px;
}

.title-ico {
  width: 14px;
  height: 14px;
  margin-left: -3px;
}

.title-text {
  margin-left: 4px;
  white-space: nowrap;
  font-family: "Noto Sans", "Noto Sans CJK SC", sans-serif;
  font-size: 16.2px;
}

.siemens {
  margin-left: auto;
  margin-right: 28px;
  font-weight: 700;
  font-size: 14.5px;
  letter-spacing: 0.6px;
}

.win-btns {
  display: flex;
  gap: 2px;
  align-self: flex-start;
  margin-top: 2px;
}

.wb {
  width: 21px;
  height: 20px;
  padding: 0;
  border: 1px solid #333;
  border-radius: 3px;
  background: linear-gradient(#6a6a6a, #2c2c2c);
  color: #fff;
  display: flex;
  align-items: center;
  justify-content: center;
  font-family: "DejaVu Sans", sans-serif;
}

.wb.close {
  background: linear-gradient(#f09070, #d83818);
  font-size: 14px;
  font-weight: 700;
}

.min {
  width: 7px;
  height: 3px;
  margin-top: 8px;
  background: #fff;
}

.rest {
  width: 8px;
  height: 7px;
  border: 1.5px solid #fff;
  box-shadow: 2px -2px 0 -0.5px #666, 3px -3px 0 -0.5px #fff;
}

/* menu */
.menu {
  height: 27px;
  flex: none;
  box-sizing: border-box;
  padding-bottom: 2px;
  display: flex;
  align-items: center;
  gap: 11px;
  background: #e4e4e4;
}

.menu-ico {
  width: 14px;
  height: 16px;
  margin-right: -5px;
}

.menu-item {
  white-space: nowrap;
}

.menu-sep {
  width: 1px;
  height: 22px;
  margin: 0 -3px;
  background: #bbb;
  box-shadow: 1px 0 0 #f4f4f4;
}

.doc-btns {
  margin-left: auto;
  margin-right: 6px;
  display: flex;
  gap: 4px;
}

.db {
  width: 15px;
  height: 15px;
  border: 1px solid #8a8a8a;
  border-radius: 3px;
  background: linear-gradient(#f6f6f6, #d4d4d4);
  display: flex;
  align-items: center;
  justify-content: center;
  font-family: "DejaVu Sans", sans-serif;
  color: #555;
}

.dmin {
  width: 7px;
  height: 2px;
  margin-top: 6px;
  background: #555;
}

.drest {
  width: 7px;
  height: 6px;
  border: 1px solid #555;
  box-shadow: 2px -2px 0 -1px #555;
}

.dx {
  font-size: 11px;
  font-weight: 700;
}

/* toolbars */
.bar {
  flex: none;
  height: 33px;
  margin-bottom: 1px;
  display: flex;
  align-items: center;
  background: linear-gradient(#dcdcdc, #d4d4d4);
  border-bottom: 1px solid #f0f0f0;
  box-sizing: border-box;
  overflow: hidden;
}

.bar0 {
  width: 1321px;
}

.bar2 {
  height: 35px;
  margin-bottom: 0;
  border-bottom: 1px solid #9a9a9a;
}

.ico {
  width: 24px;
  height: 24px;
  flex: none;
  margin: 0 3.5px;
}

.bar-label {
  white-space: nowrap;
  margin-left: -2px;
  margin-right: 2px;
}

.sep {
  flex: none;
  align-self: stretch;
  width: 1px;
  margin: 2px 3px;
  background: #b4b4b4;
  box-shadow: 1px 0 0 #f4f4f4;
}

.grip {
  flex: none;
  width: 2px;
  height: 22px;
  margin: 0 3px 0 1px;
  background: repeating-linear-gradient(#888 0 2px, #f0f0f0 2px 4px);
}

.v {
  flex: none;
  width: 11px;
  height: 4px;
  position: relative;
}

.v::after {
  content: "";
  position: absolute;
  left: 2px;
  top: 0;
  border: 3.5px solid transparent;
  border-top: 4px solid #111;
  border-bottom: 0;
}

.v.low {
  align-self: flex-end;
  margin-bottom: 6px;
}

.gap {
  flex: none;
  width: 0;
}

.more {
  flex: none;
  width: 10px;
  height: 26px;
  position: relative;
}

.more::before {
  content: "»";
  position: absolute;
  top: -6px;
  left: 0;
  font-size: 14px;
  font-weight: 700;
}

.more::after {
  content: "";
  position: absolute;
  bottom: 3px;
  left: 1px;
  border: 3.5px solid transparent;
  border-top: 4px solid #111;
  border-bottom: 0;
}

/* selection row */
.filter {
  height: 31px;
  margin: 0;
  background: linear-gradient(#d0d0d0, #dcdcdc 30%, #d8d8d8);
  border-bottom: 1px solid #f0f0f0;
  padding-right: 3px;
}

.combo {
  flex: none;
  width: 150px;
  height: 20px;
  margin-left: 10px;
  display: flex;
  box-sizing: border-box;
  border: 1px solid #777;
  border-radius: 3px;
  background: #fff;
  line-height: 18px;
  overflow: hidden;
}

.combo.first {
  width: 138px;
  margin-left: -1px;
}

.combo span {
  flex: 1;
  padding-left: 1px;
  white-space: nowrap;
  overflow: hidden;
}

.combo.first span {
  margin-left: -4px;
}

.combo b {
  flex: none;
  width: 17px;
  background: linear-gradient(#eaf2ff, #7aa8e8 55%, #b8d0f4);
  display: flex;
  align-items: center;
  justify-content: center;
}

.combo b i {
  border: 5px solid transparent;
  border-top: 5px solid #0a2a70;
  border-bottom: 0;
}

.ico2 {
  width: 20px;
  height: 20px;
  flex: none;
  margin: 0 1.75px;
}

.toggle {
  flex: none;
  width: 22px;
  height: 22px;
  display: flex;
  align-items: center;
  justify-content: center;
  border: 1px solid #777;
  border-radius: 3px;
  background: #fff;
  box-sizing: border-box;
}

.toggle .ico2 {
  margin: 0;
  width: 18px;
  height: 18px;
}

.end {
  margin-left: auto;
  align-self: flex-end;
  margin-bottom: 6px;
}

/* cue line */
.status {
  height: 22px;
  flex: none;
  display: flex;
  align-items: center;
  background: #e4e4e4;
  border-bottom: 1px solid #888;
  box-sizing: border-box;
}

.cue {
  width: 624px;
  flex: none;
  margin-left: -3px;
  margin-right: 3px;
  margin-bottom: 4px;
  font-size: 12.6px;
  white-space: nowrap;
}

.cell {
  flex: none;
  width: 633px;
  align-self: stretch;
  border-left: 1px solid #fafafa;
}

.cell.small {
  width: 19px;
  border-right: 1px solid #fafafa;
}

.flag {
  width: 16px;
  height: 16px;
  margin-left: 45px;
}

.fs {
  width: 12px;
  height: 12px;
  margin-left: 5px;
  padding: 1px;
  box-sizing: border-box;
  border: 1px dashed #444;
}

.fs i {
  display: block;
  height: 100%;
  background: linear-gradient(#bcd8f8, #1f5fd0);
}

/* work area */
.work {
  flex: 1;
  min-height: 0;
  display: flex;
}

.side {
  flex: none;
  width: 22px;
  height: 488px;
  border-right: 1px solid #777;
  background: #c8c8c8;
  overflow: hidden;
}

.side-gap {
  background: #c6c6c6;
}

.side-btn {
  display: flex;
  align-items: center;
  justify-content: flex-end;
  background: #dcdcdc;
  border-bottom: 2px solid #9c9c9c;
  box-sizing: border-box;
  overflow: hidden;
}

.side-btn svg {
  flex: none;
  width: 26px;
  height: 26px;
  margin-right: 1px;
}

.nav-btns {
  display: flex;
  flex-direction: column;
  gap: 1px;
  padding-top: 3px;
  padding-left: 1px;
}

.nb {
  width: 15px;
  height: 14px;
  border: 1px solid #9c9c9c;
  background: #eee;
  display: flex;
  flex-direction: column;
  align-items: center;
  justify-content: center;
}

.up,
.bar-up {
  border: 5px solid transparent;
  border-bottom: 5px solid #777;
  border-top: 0;
}

.bar-up {
  border-bottom-color: #999;
}

.down,
.bar-down {
  border: 5px solid transparent;
  border-top: 5px solid #333;
  border-bottom: 0;
}

.strip {
  flex: none;
  width: 9px;
  background: linear-gradient(rgba(255, 255, 255, 0.15), rgba(255, 255, 255, 0.15)),
    linear-gradient(#97bedc 0, #c6d7e4 36%, #e4e4e4 61%);
}

.canvas {
  position: relative;
  flex: 1;
  min-width: 0;
  background: linear-gradient(#97bedc 0, #c6d7e4 36%, #e4e4e4 61%, #e4e4e4 95%, #dadada 100%);
}

.scene {
  position: absolute;
  inset: 0;
  width: 100%;
  height: 100%;
}

.axis {
  font-size: 11px;
  font-family: "Liberation Sans", sans-serif;
}

.z {
  fill: #0a1fd0;
  font-weight: 700;
}

.xl {
  fill: #e06060;
}

.activate {
  font-size: 14.5px;
  font-family: "Liberation Sans", "Noto Sans CJK SC", sans-serif;
  fill: rgba(90, 90, 90, 0.55);
}

.activate.big {
  font-size: 22px;
}

.brand {
  font-family: "Noto Sans CJK SC", sans-serif;
  font-weight: 700;
  font-size: 48px;
  fill: #6cc0e8;
  stroke: #fff;
  stroke-width: 3px;
  paint-order: stroke;
}

.brand-url {
  font-family: "Liberation Sans", sans-serif;
  font-weight: 700;
  font-size: 16px;
  letter-spacing: 3.5px;
  fill: #6cc0e8;
  stroke: #fff;
  stroke-width: 2px;
  paint-order: stroke;
}

/* speed meter */
.speed {
  position: absolute;
  left: 919px;
  top: 372px;
  width: 204px;
  height: 21px;
  box-sizing: border-box;
  display: flex;
  align-items: center;
  border: 1px solid #b8c8e4;
  border-radius: 6px;
  background: linear-gradient(#74a2ea 50%, #4a85de 50%);
  color: #fff;
  font-size: 12px;
  overflow: hidden;
}

.arrow {
  width: 12px;
  height: 12px;
  margin-left: 9px;
  flex: none;
}

.arrow.second {
  margin-left: 15px;
}

.rate {
  margin-left: 16px;
  width: 36px;
  font-family: "Open Sans", sans-serif;
  font-size: 12.5px;
}

.pct {
  margin-left: auto;
  width: 37px;
  height: 100%;
  line-height: 19px;
  text-align: center;
  border-left: 1px solid #cfe0f8;
  box-sizing: border-box;
  background: linear-gradient(120deg, #5c9ce8, #9cc8f0 60%, #6ea8ea);
  font-family: "Open Sans", sans-serif;
  font-size: 12.5px;
}

/* dialog */
.dialog {
  position: absolute;
  left: 45px;
  top: 1px;
  width: 317px;
  height: 339px;
  display: flex;
  flex-direction: column;
}

.dlg-title {
  height: 20px;
  flex: none;
  display: flex;
  align-items: center;
  background: linear-gradient(#6e6e6e, #3a3a3a 40%, #111 50%, #111);
  color: #fff;
}

.dlg-gear {
  width: 21px;
  height: 20px;
  display: flex;
  align-items: center;
  justify-content: center;
  border-right: 1px solid #aaa;
}

.dlg-name {
  margin-left: 8px;
  margin-bottom: 5px;
  font-weight: 700;
  font-size: 14.5px;
  letter-spacing: 2.2px;
}

.dlg-x {
  margin-left: auto;
  width: 21px;
  height: 20px;
  display: flex;
  align-items: center;
  justify-content: center;
  border-left: 1px solid #aaa;
}

.dlg-body {
  flex: 1;
  display: flex;
  flex-direction: column;
  padding: 9px 9px 0 9px;
  background: #e9e9e9;
  border-left: 1px solid #777;
  border-right: 1px solid #999;
}

.dlg-filter {
  display: flex;
  justify-content: space-between;
  align-items: center;
  height: 18px;
  padding-right: 1px;
}

.fake-input {
  width: 72px;
  height: 18px;
  box-sizing: border-box;
  padding: 1px 2px;
  border: 1px solid #888;
  border-radius: 3px;
  background: #fff;
  line-height: 14px;
}

.fake-input mark {
  display: block;
  width: 10px;
  height: 14px;
  padding-top: 1px;
  text-align: center;
  background: #3399ff;
  color: #fff;
  font-size: 13px;
  box-sizing: border-box;
}

.dlg-list {
  height: 233px;
  box-sizing: border-box;
  margin-top: 4px;
  padding: 1px 0;
  border: 1px solid #666;
  background: #fff;
  line-height: 16px;
}

.dlg-rule {
  height: 1px;
  margin: 7px -2px 0 -2px;
  background: #c8c8c8;
}

.dlg-actions {
  display: flex;
  justify-content: flex-end;
  gap: 7px;
  margin-top: 5px;
  padding-right: 7px;
}

.dlg-actions button {
  width: 52px;
  height: 22px;
  padding: 0;
  border: 1px solid #b0b0b0;
  border-radius: 3px;
  background: linear-gradient(#f0f0f0, #dcdcdc);
  color: #999;
  font: inherit;
}

.dlg-actions .active {
  border-color: #555;
  color: #111;
}

.dlg-foot {
  height: 9px;
  flex: none;
  background: linear-gradient(#444, #111 3px);
  border-radius: 0 0 6px 6px;
}

/* sketch toolbar over the viewport */
.bottom {
  position: absolute;
  left: 0;
  bottom: 0;
  width: 806px;
  height: 26px;
  display: flex;
  align-items: flex-start;
  padding-top: 7px;
  box-sizing: border-box;
  overflow: hidden;
  background: #dedede;
  border-top: 1px solid #f4f4f4;
  border-right: 1px solid #aaa;
}

.bottom .ico {
  margin: 0 3.5px;
}

.bottom .sep {
  height: 30px;
  margin-top: -7px;
}

.bottom .v {
  align-self: center;
  margin: 0;
}

.bottom .v.low {
  align-self: flex-end;
  margin-bottom: 1px;
}

.done {
  color: #999;
  white-space: nowrap;
  line-height: 20px;
}
</style>

<style>
html,
body {
  margin: 0;
  overflow: hidden;
}
</style>
